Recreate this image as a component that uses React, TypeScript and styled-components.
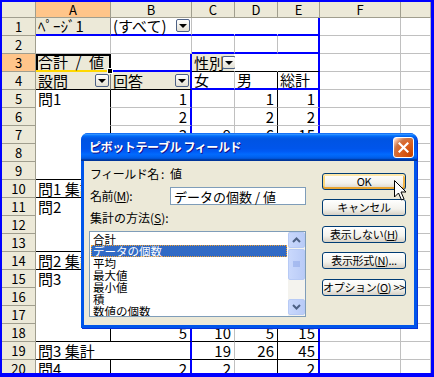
import React from "react";
import styled, { createGlobalStyle } from "styled-components";

const FONT = `"Noto Sans CJK JP", "Noto Sans", sans-serif`;
const BLUE = "#0000ff";
const GRID = "#c0c0c0";

const line = (c: string, w = 1) => `${w}px solid ${c}`;
const blk = line("#000");
const blu = line(BLUE, 2);
const wht = line("#fff");

const GlobalStyle = createGlobalStyle`
  body {
    margin: 0;
    background: #fff;
  }
`;

// Excel window
const Window = styled.div`
  position: relative;
  box-sizing: border-box;
  width: 434px;
  height: 377px;
  overflow: hidden;
  border-style: solid;
  border-color: ${BLUE};
  border-width: 2px 3px 4px 2px;
  background: #fff;
`;

const Sheet = styled.div`
  display: grid;
  grid-template-columns: 34px 75px 81px 43px 43px 42px 81px 30px;
  grid-template-rows: 16px repeat(20, 18px);
`;

const HeadCell = styled.div<{ $sel?: boolean }>`
  box-sizing: border-box;
  display: flex;
  align-items: center;
  justify-content: center;
  background: ${(p) => (p.$sel ? "#ffc58a" : "#ece9d8")};
  border-right: 1px solid #a09e8e;
  border-bottom: 1px solid #a09e8e;
  font: 13px/1 ${FONT};
  color: #000;
`;

type CellProps = {
  $bg?: string;
  $r?: string;
  $b?: string;
  $num?: boolean;
  $span?: number;
  $sel?: boolean;
};

const Cell = styled.div<CellProps>`
  box-sizing: border-box;
  display: flex;
  align-items: flex-end;
  justify-content: ${(p) => (p.$num ? "flex-end" : "flex-start")};
  padding: 0 ${(p) => (p.$num ? "3px" : "1px")} 0 2px;
  background: ${(p) => p.$bg ?? "#fff"};
  border-right: ${(p) => p.$r ?? line(GRID)};
  border-bottom: ${(p) => p.$b ?? line(GRID)};
  grid-column: ${(p) => (p.$span ? `span ${p.$span}` : "auto")};
  font: 15px/16px ${FONT};
  color: #000;
  white-space: nowrap;
  ${(p) =>
    p.$sel &&
    `
    position: relative;
    z-index: 1;
    box-shadow: inset 2px 2px 0 #000;
    border-right: 2px solid #000;
    border-bottom: 2px solid #ffd800;
    &::after {
      content: "";
      position: absolute;
      right: -4px;
      bottom: -4px;
      width: 4px;
      height: 4px;
      background: #000;
      border: 1px solid #fff;
    }
  `}
`;

const CellText = styled.span`
  flex: 1;
`;

const Drop = styled.span`
  box-sizing: border-box;
  flex: none;
  width: 14px;
  height: 13px;
  margin: 0 0 2px -2px;
  border: 1px solid #4d6185;
  border-radius: 2px;
  background: linear-gradient(#ffffff, #e3e0d3);
  display: flex;
  align-items: center;
  justify-content: center;
  &::before {
    content: "";
    border-left: 4px solid transparent;
    border-right: 4px solid transparent;
    border-top: 4px solid #000;
    margin-top: 1px;
  }
`;

// Dialog (XP style)
const Dialog = styled.div`
  position: absolute;
  left: 79px;
  top: 131px;
  width: 336px;
  height: 195px;
  box-sizing: border-box;
  display: flex;
  flex-direction: column;
  padding: 0 3px 3px;
  border-radius: 7px 7px 0 0;
  background: #0055ea;
  box-shadow: 1px 1px 0 #0831d9;
`;

const TitleBar = styled.div`
  height: 28px;
  margin: 0 -3px;
  padding: 0 3px 0 8px;
  display: flex;
  align-items: center;
  border-radius: 7px 7px 0 0;
  background: linear-gradient(
    to bottom,
    #0058ee 0%,
    #3593ff 4%,
    #288eff 6%,
    #127dff 8%,
    #036ffc 10%,
    #0262ee 14%,
    #0057e5 20%,
    #0054e3 24%,
    #0055eb 56%,
    #005bf5 66%,
    #026afe 76%,
    #0062ef 86%,
    #0052d6 92%,
    #0040ab 94%,
    #003092 100%
  );
`;

const Title = styled.div`
  flex: 1;
  color: #fff;
  font: bold 12px/1 ${FONT};
  text-shadow: 1px 1px #0f1089;
  letter-spacing: -0.4px;
`;

const CloseButton = styled.div`
  box-sizing: border-box;
  width: 21px;
  height: 21px;
  border: 1px solid #fff;
  border-radius: 3px;
  background: radial-gradient(
    circle at 90% 90%,
    #cc4600 0%,
    #dc6527 55%,
    #cd7546 70%,
    #ffccb2 90%,
    #fff 100%
  );
  display: flex;
  align-items: center;
  justify-content: center;
`;

const Body = styled.div`
  flex: 1;
  display: flex;
  gap: 16px;
  padding: 0 8px 0 5px;
  background: #ece9d8;
  font: 12px/1 ${FONT};
  color: #000;
`;

const Fields = styled.div`
  width: 217px;
  display: flex;
  flex-direction: column;
`;

const FieldRow = styled.div<{ $top: number; $h: number }>`
  margin-top: ${(p) => p.$top}px;
  height: ${(p) => p.$h}px;
  display: flex;
  align-items: center;
  padding-left: 1px;
  white-space: nowrap;
`;

const Label = styled.span`
  width: 80px;
  flex: none;
  letter-spacing: -0.5px;
`;

const TextBox = styled.div`
  box-sizing: border-box;
  flex: 1;
  height: 18px;
  padding: 0 3px;
  display: flex;
  align-items: center;
  background: #fff;
  border: 1px solid #7f9db9;
  font-size: 13px;
`;

const ListBox = styled.div`
  box-sizing: border-box;
  margin-top: 6px;
  height: 86px;
  display: flex;
  background: #fff;
  border: 1px solid #7f9db9;
`;

const Items = styled.div`
  flex: 1;
  padding: 1px 1px 0;
  overflow: hidden;
`;

const Item = styled.div<{ $sel?: boolean }>`
  box-sizing: border-box;
  height: 12px;
  padding-left: 2px;
  font-size: 11.5px;
  line-height: 12px;
  white-space: nowrap;
  background: ${(p) => (p.$sel ? "#316ac5" : "transparent")};
  color: ${(p) => (p.$sel ? "#fff" : "#000")};
  outline: ${(p) => (p.$sel ? "1px dotted #f0a030" : "none")};
  outline-offset: -1px;
`;

const ScrollBar = styled.div`
  width: 17px;
  display: flex;
  flex-direction: column;
  gap: 1px;
  background: #f4f3ee;
`;

const ScrollBtn = styled.div<{ $grow?: boolean; $mt?: number }>`
  box-sizing: border-box;
  height: ${(p) => (p.$grow ? "31px" : "16px")};
  margin-top: ${(p) => p.$mt ?? 0}px;
  border: 1px solid #b7caf5;
  border-radius: 2px;
  background: linear-gradient(to right, #c9d8fc, #b9cbf7);
  display: flex;
  align-items: center;
  justify-content: center;
`;

const Buttons = styled.div`
  width: 84px;
  padding-top: 12px;
  display: flex;
  flex-direction: column;
`;

const Button = styled.div<{ $default?: boolean; $mt?: number }>`
  box-sizing: border-box;
  height: 17px;
  margin-top: ${(p) => p.$mt ?? 0}px;
  display: flex;
  align-items: center;
  justify-content: center;
  border: 1px solid #003c74;
  border-radius: 3px;
  background: linear-gradient(#fff, #f3f2ec 60%, #d6d0c5);
  box-shadow: ${(p) =>
    p.$default
      ? "inset 0 2px 0 #fee7a8, inset 0 -2px 0 #e8a532, inset 2px 0 0 #fbd87e, inset -2px 0 0 #f2b548"
      : "none"};
  font-size: 11px;
  letter-spacing: -0.3px;
  white-space: nowrap;
`;

const U = styled.span`
  text-decoration: underline;
`;

const Pointer = styled.svg`
  position: absolute;
  left: 392px;
  top: 178px;
  z-index: 3;
`;

const cols = ["A", "B", "C", "D", "E", "F", ""];

type BodyRow = {
  n: number;
  label?: string;
  total?: string;
  last?: boolean;
  v: (number | string)[];
};

// rows 8-17 lie under the dialog, their values are not shown
const rows: BodyRow[] = [
  { n: 5, label: "問1", v: [1, "", 1, 1] },
  { n: 6, v: [2, "", 2, 2] },
  { n: 7, v: [3, 9, 6, 15] },
  { n: 8, v: ["", "", "", ""] },
  { n: 9, v: ["", "", "", ""], last: true },
  { n: 10, total: "問1 集計", v: ["", "", ""] },
  { n: 11, label: "問2", v: ["", "", "", ""] },
  { n: 12, v: ["", "", "", ""] },
  { n: 13, v: ["", "", "", ""], last: true },
  { n: 14, total: "問2 集計", v: ["", "", ""] },
  { n: 15, label: "問3", v: ["", "", "", ""] },
  { n: 16, v: ["", "", "", ""] },
  { n: 17, v: ["", "", "", ""] },
  { n: 18, v: [5, 10, 5, 15], last: true },
  { n: 19, total: "問3 集計", v: [19, 26, 45] },
  { n: 20, label: "問4", v: [2, 2, "", 2] },
];

const FIELD = "#ece9d8";

function BodyRows() {
  return (
    <>
      {rows.map((r) => {
        const b = r.last || r.total ? blk : line(GRID);
        return (
          <React.Fragment key={r.n}>
            <HeadCell>{r.n}</HeadCell>
            {r.total ? (
              <Cell $span={2} $r={blu} $b={blk}>
                {r.total}
              </Cell>
            ) : (
              <>
                <Cell $r={blk} $b={r.last ? blk : wht}>
                  {r.label}
                </Cell>
                <Cell $num $r={blu} $b={b}>
                  {r.v[0]}
                </Cell>
              </>
            )}
            {(r.total ? r.v : r.v.slice(1)).map((v, i) => (
              <Cell
                key={i}
                $num
                $b={b}
                $r={i === 0 ? line(GRID) : i === 1 ? blk : blu}
              >
                {v}
              </Cell>
            ))}
            <Cell />
            <Cell />
          </React.Fragment>
        );
      })}
    </>
  );
}

export default function App() {
  return (
    <>
      <GlobalStyle />
      <Window>
        <Sheet>
          <HeadCell />
          {cols.map((c, i) => (
            <HeadCell key={i} $sel={c === "A"}>
              {c}
            </HeadCell>
          ))}

          {/* row 1: page field */}
          <HeadCell>1</HeadCell>
          <Cell $bg={FIELD} $r={line("#808080")} $b={blu}>
            ﾍﾟｰｼﾞ1
          </Cell>
          <Cell $b={blu}>
            <CellText>(すべて)</CellText>
            <Drop />
          </Cell>
          <Cell $b={blu} $r={wht} />
          <Cell $b={blu} $r={wht} />
          <Cell $b={blu} $r={blu} />
          <Cell />
          <Cell />

          {/* row 2 */}
          <HeadCell>2</HeadCell>
          <Cell />
          <Cell />
          <Cell $b={blu} />
          <Cell $b={blu} />
          <Cell $b={blu} $r={blu} />
          <Cell />
          <Cell />

          {/* row 3 */}
          <HeadCell $sel>3</HeadCell>
          <Cell $bg={FIELD} $sel>
            合計{"\u2002"}/{"\u2002"}値
          </Cell>
          <Cell $b={blu} $r={blu} />
          <Cell $bg={FIELD} $b={blk} $r={wht}>
            <CellText>性別</CellText>
            <Drop />
          </Cell>
          <Cell $b={blk} $r={wht} />
          <Cell $b={blk} $r={blu} />
          <Cell />
          <Cell />

          {/* row 4 */}
          <HeadCell>4</HeadCell>
          <Cell $bg={FIELD} $b={blk} $r={line("#808080")}>
            <CellText>設問</CellText>
            <Drop />
          </Cell>
          <Cell $bg={FIELD} $b={blk} $r={blu}>
            <CellText>回答</CellText>
            <Drop />
          </Cell>
          <Cell $b={blu}>女</Cell>
          <Cell $b={blu} $r={blk}>
            男
          </Cell>
          <Cell $b={blu} $r={blu}>
            総計
          </Cell>
          <Cell />
          <Cell />

          <BodyRows />
        </Sheet>

        <Dialog>
          <TitleBar>
            <Title>ピボットテーブル フィールド</Title>
            <CloseButton>
              <svg width="11" height="11" viewBox="0 0 11 11">
                <path
                  d="M1.5 1.5 L9.5 9.5 M9.5 1.5 L1.5 9.5"
                  stroke="#fff"
                  strokeWidth="2.2"
                  strokeLinecap="square"
                />
              </svg>
            </CloseButton>
          </TitleBar>
          <Body>
            <Fields>
              <FieldRow $top={5} $h={16}>
                <Label>フィールド名 :</Label>
                <span>値</span>
              </FieldRow>
              <FieldRow $top={5} $h={18}>
                <Label>
                  名前(<U>M</U>):
                </Label>
                <TextBox>データの個数 / 値</TextBox>
              </FieldRow>
              <FieldRow $top={6} $h={14}>
                集計の方法(<U>S</U>):
              </FieldRow>
              <ListBox>
                <Items>
                  <Item>合計</Item>
                  <Item $sel>データの個数</Item>
                  <Item>平均</Item>
                  <Item>最大値</Item>
                  <Item>最小値</Item>
                  <Item>積</Item>
                  <Item>数値の個数</Item>
                </Items>
                <ScrollBar>
                  <ScrollBtn>
                    <svg width="9" height="6" viewBox="0 0 9 6">
                      <path d="M1 5 L4.5 1.5 L8 5" fill="none" stroke="#4d6185" strokeWidth="2" />
                    </svg>
                  </ScrollBtn>
                  <ScrollBtn $grow>
                    <svg width="7" height="7" viewBox="0 0 7 7">
                      <path d="M0 1h7M0 3h7M0 5h7" stroke="#8aa4e6" strokeWidth="1" />
                    </svg>
                  </ScrollBtn>
                  <ScrollBtn $mt={18}>
                    <svg width="9" height="6" viewBox="0 0 9 6">
                      <path d="M1 1 L4.5 4.5 L8 1" fill="none" stroke="#4d6185" strokeWidth="2" />
                    </svg>
                  </ScrollBtn>
                </ScrollBar>
              </ListBox>
            </Fields>
            <Buttons>
              <Button $default>OK</Button>
              <Button $mt={9}>キャンセル</Button>
              <Button $mt={10}>
                表示しない(<U>H</U>)
              </Button>
              <Button $mt={9}>
                表示形式(<U>N</U>)...
              </Button>
              <Button $mt={10}>
                オプション(<U>O</U>) &gt;&gt;
              </Button>
            </Buttons>
          </Body>
        </Dialog>

        <Pointer width="13" height="21" viewBox="0 0 13 21">
          <path
            d="M0.5 0.5 L0.5 17 L4.5 13 L7.5 20 L10 19 L7 12 L12 12 Z"
            fill="#fff"
            stroke="#000"
            strokeWidth="1"
          />
        </Pointer>
      </Window>
    </>
  );
}
